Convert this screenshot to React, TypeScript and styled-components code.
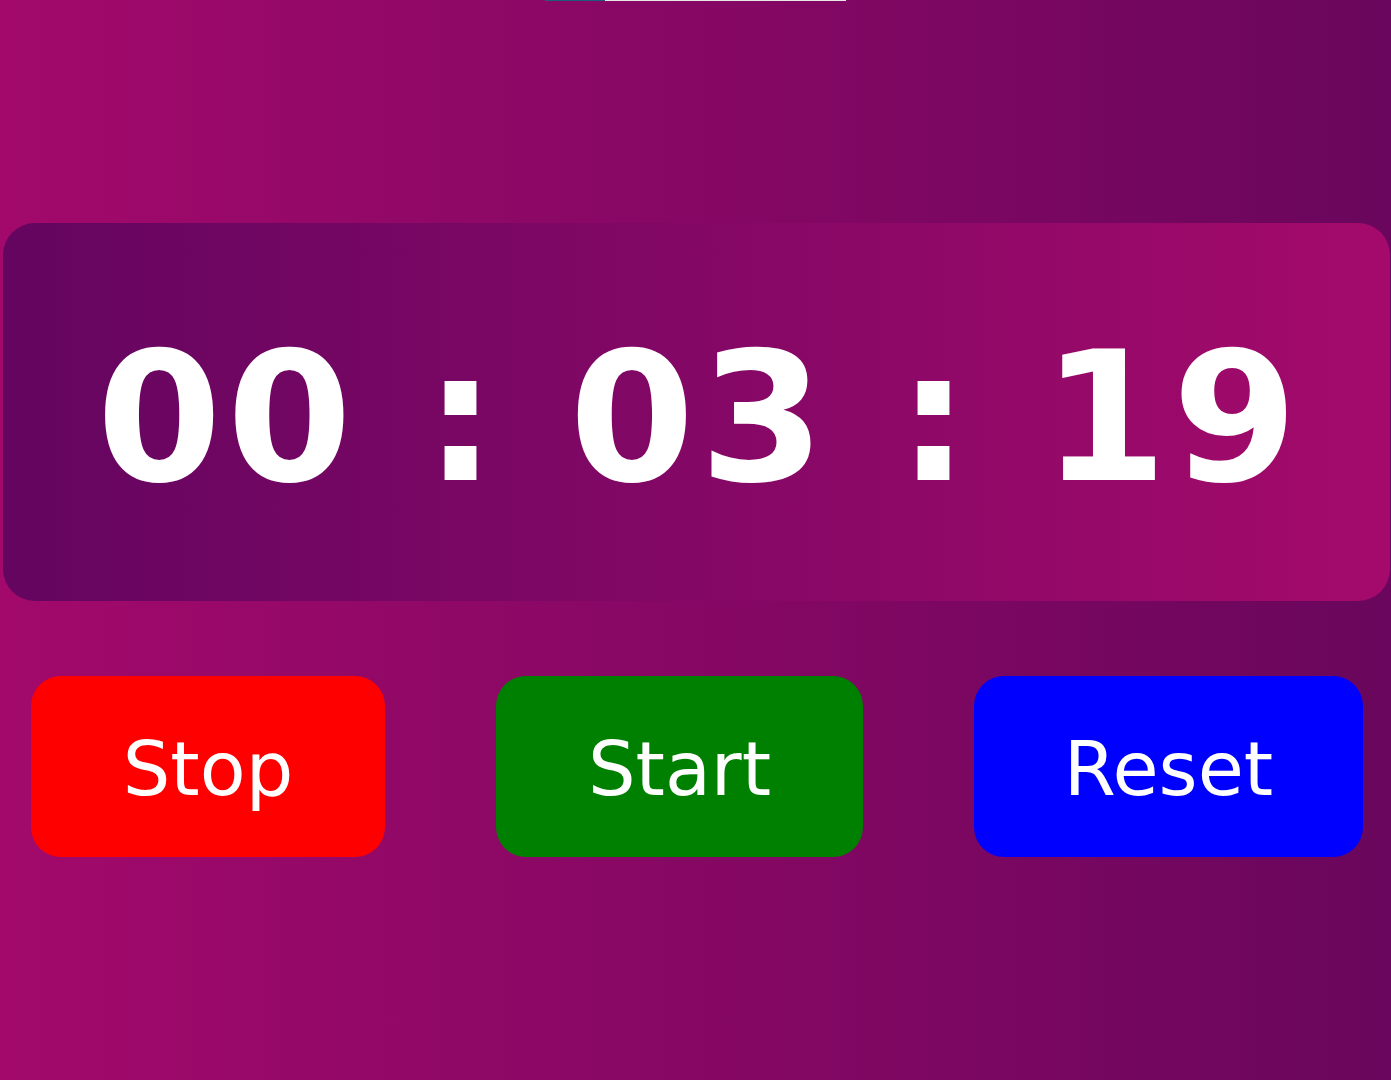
import React from "react";
import styled, { createGlobalStyle } from "styled-components";

const Global = createGlobalStyle`
  html, body { margin: 0; padding: 0; }
  body {
    min-height: 100vh;
    background: linear-gradient(to right, #a2096b, #6a065d);
    font-family: "DejaVu Sans", Verdana, sans-serif;
    color: #fff;
  }
`;

const Page = styled.main`
  min-height: 100vh;
  display: flex;
  flex-direction: column;
`;

const Progress = styled.div`
  align-self: center;
  width: 301px;
  height: 1px;
  background: #e8e8e8;
  display: flex;
`;

const ProgressFill = styled.div`
  height: 100%;
  background: #1d5a7c;
`;

const Card = styled.section`
  margin: 222px 1px 0 3px;
  height: 378px;
  border-radius: 32px;
  background: linear-gradient(to right, #640560, #a40a6b);
  display: flex;
  align-items: center;
  justify-content: center;
`;

const Time = styled.h1`
  margin: 12px 0 0 6px;
  font-family: "DejaVu Sans", Verdana, sans-serif;
  font-weight: 700;
  font-size: 180px;
  line-height: 1;
  letter-spacing: 5px;
  white-space: pre;
  color: #fff;
`;

const Controls = styled.div`
  display: flex;
  gap: 111px;
  padding-left: 31px;
  margin-top: 75px;
`;

const Button = styled.button<{ $bg: string; $w: number }>`
  width: ${(p) => p.$w}px;
  height: 181px;
  border: none;
  border-radius: 30px;
  background: ${(p) => p.$bg};
  color: #fff;
  font-family: "DejaVu Sans", Verdana, sans-serif;
  font-size: 75px;
  line-height: 1;
  padding: 6px 0 0;
  cursor: pointer;
`;

export default function App() {
  return (
    <>
      <Global />
      <Page>
        <Progress>
          <ProgressFill style={{ width: "20%" }} />
        </Progress>
        <Card>
          <Time>00 : 03 : 19</Time>
        </Card>
        <Controls>
          <Button $bg="#ff0000" $w={354}>Stop</Button>
          <Button $bg="#008000" $w={367}>Start</Button>
          <Button $bg="#0000ff" $w={389}>Reset</Button>
        </Controls>
      </Page>
    </>
  );
}
